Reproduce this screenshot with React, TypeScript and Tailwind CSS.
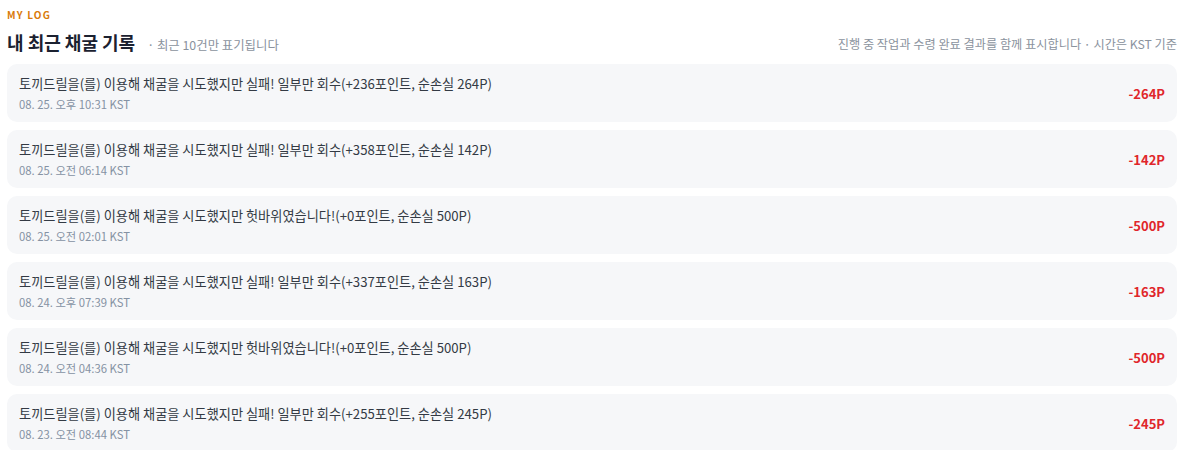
import React from 'react';

interface LogItem {
  message: string;
  time: string;
  amount: number;
}

const logs: LogItem[] = [
  { message: '토끼드릴을(를) 이용해 채굴을 시도했지만 실패! 일부만 회수(+236포인트, 순손실 264P)', time: '08. 25. 오후 10:31 KST', amount: -264 },
  { message: '토끼드릴을(를) 이용해 채굴을 시도했지만 실패! 일부만 회수(+358포인트, 순손실 142P)', time: '08. 25. 오전 06:14 KST', amount: -142 },
  { message: '토끼드릴을(를) 이용해 채굴을 시도했지만 헛바위였습니다!(+0포인트, 순손실 500P)', time: '08. 25. 오전 02:01 KST', amount: -500 },
  { message: '토끼드릴을(를) 이용해 채굴을 시도했지만 실패! 일부만 회수(+337포인트, 순손실 163P)', time: '08. 24. 오후 07:39 KST', amount: -163 },
  { message: '토끼드릴을(를) 이용해 채굴을 시도했지만 헛바위였습니다!(+0포인트, 순손실 500P)', time: '08. 24. 오전 04:36 KST', amount: -500 },
  { message: '토끼드릴을(를) 이용해 채굴을 시도했지만 실패! 일부만 회수(+255포인트, 순손실 245P)', time: '08. 23. 오전 08:44 KST', amount: -245 },
];

const LogRow: React.FC<{ log: LogItem }> = ({ log }) => (
  <div className="flex items-center justify-between h-[58px] rounded-[10px] bg-[#f6f7f9] pl-3 pr-3">
    <div className="flex flex-col">
      <p className="text-[13.2px] leading-[18px] text-[#333a44]">{log.message}</p>
      <p className="mt-[4px] text-[11.3px] leading-[14px] text-[#8592a3]">{log.time}</p>
    </div>
    <span className="mt-[1px] text-[13px] font-bold text-[#e0262b]">
      {log.amount}P
    </span>
  </div>
);

export default function App() {
  return (
    <div
      className="min-h-[450px] bg-white px-[7px] pt-[8px] pr-[8px]"
      style={{ fontFamily: '"Noto Sans CJK KR", "Noto Sans", sans-serif' }}
    >
      {/* Header */}
      <p className="text-[10px] font-bold leading-[14px] tracking-[0.12em] text-[#d97a0a]">MY LOG</p>
      <div className="mt-[8px] flex items-end justify-between">
        <div className="flex items-baseline">
          <h2 className="text-[18px] font-bold leading-[25px] text-[#1b2130]">내 최근 채굴 기록</h2>
          <span className="ml-[12px] text-[12.4px] text-[#8a929d]">· 최근 10건만 표기됩니다</span>
        </div>
        <span className="mb-[2px] text-[12.2px] text-[#8a929d]">
          진행 중 작업과 수령 완료 결과를 함께 표시합니다 · 시간은 KST 기준
        </span>
      </div>

      {/* List */}
      <div className="mt-[9px] flex flex-col gap-2">
        {logs.map((log, i) => (
          <LogRow key={i} log={log} />
        ))}
      </div>
    </div>
  );
}
